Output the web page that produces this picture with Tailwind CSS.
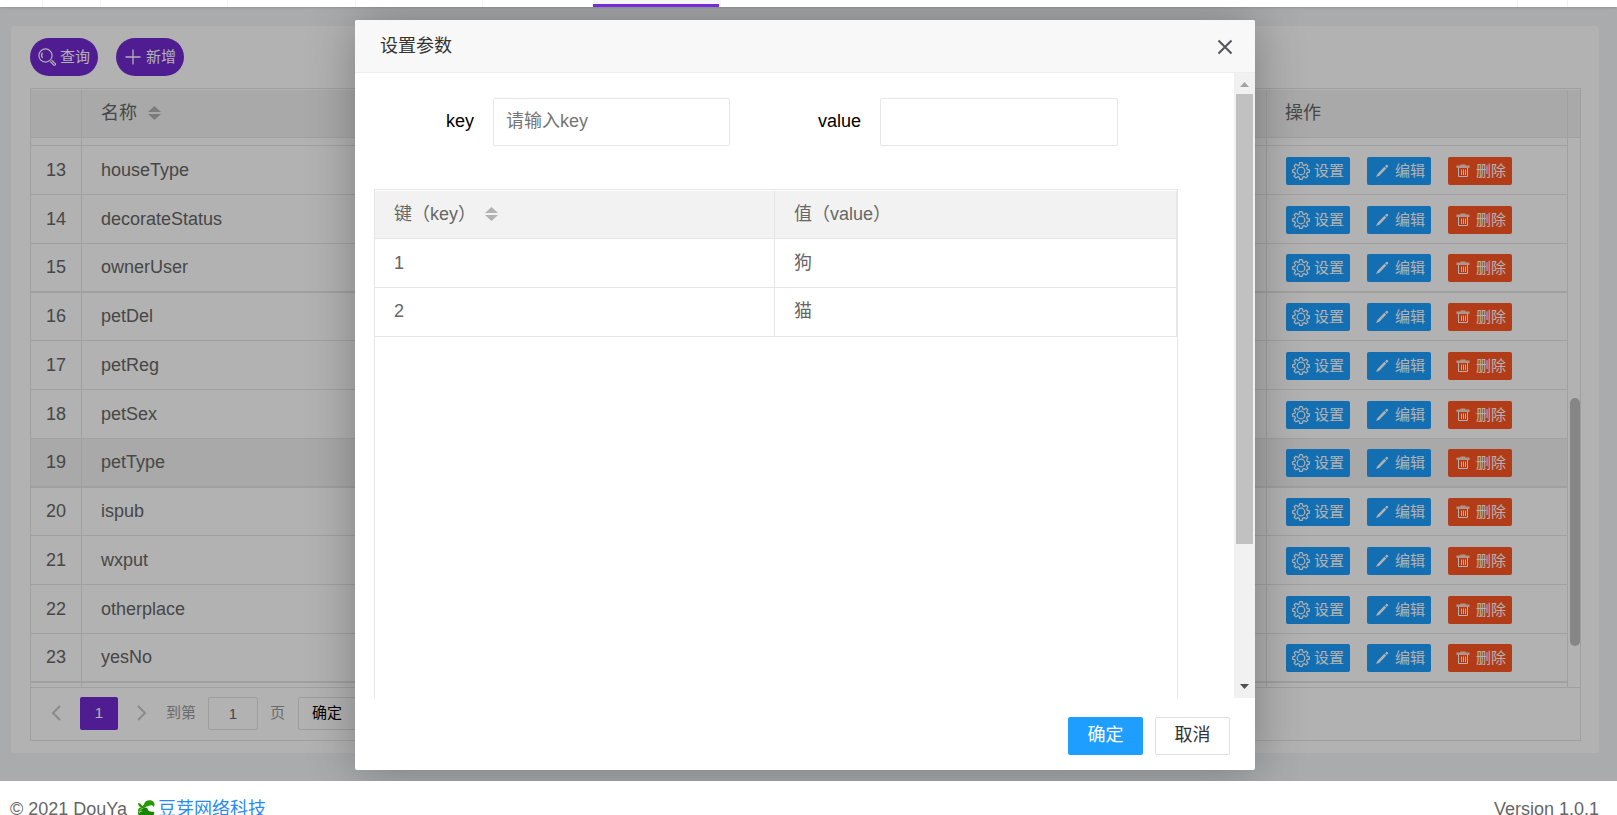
<!DOCTYPE html>
<html lang="zh-CN">
<head>
<meta charset="utf-8">
<title>设置参数</title>
<script src="https://cdn.jsdelivr.net/npm/@tailwindcss/browser@4"></script>
</head>
<body class="flex h-screen flex-col overflow-hidden bg-white font-['Liberation_Sans','Noto_Sans_CJK_SC',sans-serif] text-lg text-[#666]">

<svg class="hidden">
  <symbol id="gear" viewBox="0 0 18 18"><g fill="none" stroke="currentColor" stroke-width="1.2" stroke-linejoin="round"><path d="M7.700 .7h2.600l.5 2.300 1.300.6 2-1.400 1.800 1.800-1.300 2 .6 1.300 2.200.5v2.400l-2.200.5-.6 1.400 1.300 2-1.800 1.800-2-1.300-1.300.5-.5 2.200H7.700l-.5-2.200-1.300-.5-2 1.300-1.800-1.800 1.300-2-.6-1.400-2.200-.5V7.800l2.200-.5.6-1.300-1.300-2 1.800-1.800 2 1.400 1.300-.6z"/><circle cx="9" cy="9" r="3.800"/></g></symbol>
  <symbol id="pencil" viewBox="0 0 18 18"><path fill="currentColor" d="M13.300 2.900c.8-.7 2.500.9 1.800 1.700l-1.200 1.300-1.900-1.700zM11.400 4.800l1.900 1.700-7 7.200-3.300 1.300 1.500-3z"/></symbol>
  <symbol id="trash" viewBox="0 0 18 18"><path fill="currentColor" fill-opacity=".75" d="M6.500 2.500h5V3.500H15.500V6H2.500V3.500h4z"/><path fill="none" stroke="currentColor" d="M4.500 6v8.500h9V6M7.500 7.500v5.500M9.500 7.500v5.500M11.500 7.500v5.500"/></symbol>
  <symbol id="search" viewBox="0 0 18 18"><g fill="none" stroke="currentColor" stroke-width="1.200"><circle cx="7.500" cy="7.500" r="6.600"/><path d="M4.500 4.700C3.300 6.300 3.400 8.500 4.500 10"/><path stroke-linejoin="round" d="m12.400 13.500 3.400 3.600c1 .5 2.100-.6 1.500-1.500l-3.600-3.300"/></g></symbol>
  <symbol id="plus" viewBox="0 0 18 18"><path fill="none" stroke="currentColor" stroke-width="1.300" d="M9 1.500v15M1.500 9h15"/></symbol>
  <symbol id="sort" viewBox="0 0 13 14"><path fill="#b2b2b2" d="M6.500 0 13 6H0zM0 8h13l-6.500 6z"/></symbol>
</svg>

<header class="relative z-10 flex h-[7px] shrink-0 bg-white shadow">
  <div class="w-[43px] border-r border-[#f2f2f2]"></div>
  <div class="w-[58px] border-r border-[#f2f2f2]"></div>
  <div class="w-[127px] border-r border-[#f2f2f2]"></div>
  <div class="w-32 border-r border-[#f2f2f2]"></div>
  <div class="w-[127px] border-r border-[#f2f2f2]"></div>
  <div class="w-[110px]"></div>
  <div class="flex w-32 items-end bg-[#f6f6f6]"><div class="h-[3px] w-[126px] bg-[#742bd9]"></div></div>
  <div class="flex-1"></div>
  <div class="w-px bg-[#f2f2f2]"></div>
  <div class="w-[49px]"></div>
  <div class="w-px bg-[#f2f2f2]"></div>
  <div class="w-[49px]"></div>
</header>

<main class="relative shrink-0 bg-[#f3f5f8] pt-[19px] pr-[18px] pb-7 pl-[11px]">
  <section class="rounded-sm bg-white py-3 pr-[18px] pl-[19px]">
    <div class="flex gap-[18px]">
      <button class="flex h-[38px] items-center gap-1 rounded-full bg-[#722ad0] px-2 text-[15px] text-white"><svg class="size-[18px]"><use href="#search"/></svg>查询</button>
      <button class="flex h-[38px] items-center gap-1 rounded-full bg-[#722ad0] px-2 text-[15px] text-white"><svg class="size-[18px]"><use href="#plus"/></svg>新增</button>
    </div>

    <div class="mt-3 border border-[#e6e6e6]">
      <div class="relative pt-px">
        <table class="w-full table-fixed border-separate border-spacing-0 text-left">
          <thead>
            <tr class="h-12 bg-[#f2f2f2]">
              <th class="w-[51px] border-r border-b border-[#e6e6e6]"></th>
              <th class="border-r border-b border-[#e6e6e6] px-[19px] pb-0.5 font-normal"><span class="flex items-center gap-[11px]">名称<svg class="h-3.5 w-[13px]"><use href="#sort"/></svg></span></th>
              <th class="w-[301px] border-r border-b border-[#e6e6e6] px-[18px] pb-0.5 font-normal">操作</th>
              <th class="w-3 border-b border-[#e6e6e6]"></th>
            </tr>
          </thead>
          <tbody id="rows"></tbody>
        </table>
        <div class="absolute right-0 bottom-[41px] h-[248px] w-2.5 rounded-full bg-[#c1c1c1]"></div>
      </div>
      <nav class="flex h-[53px] items-center border-t border-[#e6e6e6] pb-0.5 pl-[18px] text-[15px] text-[#999]">
        <button class="flex w-[31px] pl-[2px]" aria-label="上一页"><svg class="h-4 w-[10px]" viewBox="0 0 10 16" fill="none" stroke="#c8c8c8" stroke-width="2"><path d="M9 1 2 8l7 7"/></svg></button>
        <button class="h-[33px] w-[38px] rounded-xs bg-[#722ad0] text-white">1</button>
        <button class="flex w-12 pl-[19px]" aria-label="下一页"><svg class="h-4 w-[10px]" viewBox="0 0 10 16" fill="none" stroke="#c8c8c8" stroke-width="2"><path d="m1 1 7 7-7 7"/></svg></button>
        <label for="page">到第</label>
        <input id="page" value="1" class="mx-3 h-[33px] w-[50px] rounded-xs border border-[#e2e2e2] bg-white text-center text-[#666]">
        <span>页</span>
        <button class="ml-[13px] h-[33px] w-[58px] rounded-xs border border-[#e2e2e2] bg-white text-black">确定</button>
      </nav>
    </div>
  </section>

  <div class="absolute inset-0 flex justify-center overflow-hidden bg-black/30 pt-[13px] pr-[7px]">
    <div role="dialog" aria-labelledby="dlg" class="flex h-[750px] w-[900px] flex-col rounded-xs bg-white shadow-[1px_1px_50px_rgba(0,0,0,0.3)]">
      <div class="flex h-[53px] shrink-0 items-center justify-between rounded-t-xs border-b border-[#eee] bg-[#f8f8f8] pr-[22px] pl-[25px] text-[#333]">
        <h2 id="dlg">设置参数</h2>
        <button aria-label="关闭" class="pt-0.5"><svg class="size-4" viewBox="0 0 16 16" fill="none" stroke="#54535e" stroke-width="2"><path d="m1.500 1.500 13 13M14.500 1.500l-13 13"/></svg></button>
      </div>
      <div class="flex min-h-0 flex-1">
        <div class="flex flex-1 flex-col pl-[19px]">
          <form class="flex items-center pt-[25px] pb-[43px] text-black">
            <label for="key" class="w-[100px] pb-0.5 text-right">key</label>
            <input id="key" placeholder="请输入key" class="ml-[19px] h-12 w-[237px] rounded-xs border border-[#e6e6e6] px-3 pb-0.5 placeholder:text-[#757575]">
            <label for="value" class="w-[131px] pb-0.5 text-right">value</label>
            <input id="value" class="ml-[19px] h-12 w-[238px] rounded-xs border border-[#e6e6e6] px-3 pb-0.5">
          </form>
          <div class="mr-14 flex-1 border-x border-t border-[#e6e6e6] pt-px">
            <table class="w-full table-fixed border-separate border-spacing-0 text-left">
              <thead>
                <tr class="h-12 bg-[#f2f2f2]">
                  <th class="w-[400px] border-r border-b border-[#e6e6e6] px-[19px] pb-0.5 font-normal"><span class="flex items-center gap-[9px]">键（key）<svg class="h-3.5 w-[13px]"><use href="#sort"/></svg></span></th>
                  <th class="border-r border-b border-[#e6e6e6] px-[19px] pb-0.5 font-normal">值（value）</th>
                </tr>
              </thead>
              <tbody>
                <tr class="h-[49px]"><td class="border-r border-b border-[#e6e6e6] px-[19px]">1</td><td class="border-r border-b border-[#e6e6e6] px-[19px]">狗</td></tr>
                <tr class="h-[49px]"><td class="border-r border-b border-[#e6e6e6] px-[19px] pb-0.5">2</td><td class="border-r border-b border-[#e6e6e6] px-[19px] pb-0.5">猫</td></tr>
              </tbody>
            </table>
          </div>
        </div>
        <div class="flex w-[21px] flex-col items-center bg-[#f1f1f1]">
          <svg class="h-[21px] w-[9px]" viewBox="0 0 9 21"><path fill="#a3a3a3" d="M0 14h9L4.500 9z"/></svg>
          <div class="h-[450px] w-[17px] bg-[#c1c1c1]"></div>
          <div class="flex-1"></div>
          <svg class="h-[21px] w-[9px]" viewBox="0 0 9 21"><path fill="#505050" d="M0 7h9l-4.500 5z"/></svg>
        </div>
      </div>
      <div class="flex h-[72px] shrink-0 items-start justify-end gap-3 pt-[19px] pr-[25px]">
        <button class="h-[38px] w-[75px] rounded-xs bg-[#1e9fff] pb-0.5 text-white">确定</button>
        <button class="h-[38px] w-[75px] rounded-xs border border-[#dedede] bg-white pb-0.5 text-[#333]">取消</button>
      </div>
    </div>
  </div>
</main>

<footer class="flex h-14 shrink-0 items-center justify-between pr-[18px] pl-[10px]">
  <div class="flex items-center">
    <span>© 2021 DouYa</span>
    <svg class="ml-2.5 size-[18px]" viewBox="0 0 18 18"><path fill="#239a06" d="M7 4.500C7.500 1 11.500-.5 15 .8c3 1.200 3 4.700 1.500 6.200C16 5.300 14.500 5 13 5.500L9 6.800C7 8.500 4.500 8 3 10l-1.500 2C0 9.500 2 7.500 4 7.500 2 6.500 1 5 1 3c2 0 3 1 4.500 3z"/><path fill="#178407" d="M6 8.200c2.500-1.500 4.500-.5 5 1.500.8 2 2.500 1.500 6 2.300 1 2.500-1.500 5-5.500 5.500C6 18 .5 16.500 1 12.500c1-2.300 3-2.800 5-4.300z"/><path fill="#8ddd2c" d="M1.500 12c1-1.700 3-2 4.300-1-1.800.5-2.800 1-3.300 2.500z"/></svg>
    <a href="#" class="ml-[3px] text-[#2a8bf2]">豆芽网络科技</a>
  </div>
  <span>Version 1.0.1</span>
</footer>

<script>
  const names = ['houseType','decorateStatus','ownerUser','petDel','petReg','petSex','petType','ispub','wxput','otherplace','yesNo'];
  const sliver = (h, b) => `<tr class="${h}"><td class="border-r ${b} border-[#e6e6e6]"></td><td class="border-r ${b} border-[#e6e6e6]"></td><td class="border-r ${b} border-[#e6e6e6]"></td><td></td></tr>`;
  const action = (color, icon, text) => `<button class="flex h-7 items-center gap-1 rounded-xs px-1.5 text-[15px] text-white ${color}"><svg class="size-[18px]"><use href="#${icon}"/></svg>${text}</button>`;
  document.getElementById('rows').innerHTML = sliver('h-2', 'border-b') + names.map((name, i) => {
    const line = i % 4 === 2 ? 'border-b-2' : 'border-b';
    const height = i % 4 === 3 ? 'h-12' : 'h-[49px]';
    const fill = name === 'petType' ? 'bg-[#f2f2f2]' : '';
    return `<tr class="${height}">
      <td class="border-r ${line} ${fill} border-[#e6e6e6] pb-px text-center">${13 + i}</td>
      <td class="border-r ${line} ${fill} border-[#e6e6e6] px-[19px] pb-px">${name}</td>
      <td class="border-r ${line} ${fill} border-[#e6e6e6] px-[19px] pt-px"><div class="flex gap-[17px]">${action('bg-[#1e9fff]', 'gear', '设置')}${action('bg-[#1e9fff]', 'pencil', '编辑')}${action('bg-[#ff5722]', 'trash', '删除')}</div></td>
      <td></td></tr>`;
  }).join('') + sliver('h-1', '');
</script>
</body>
</html>
